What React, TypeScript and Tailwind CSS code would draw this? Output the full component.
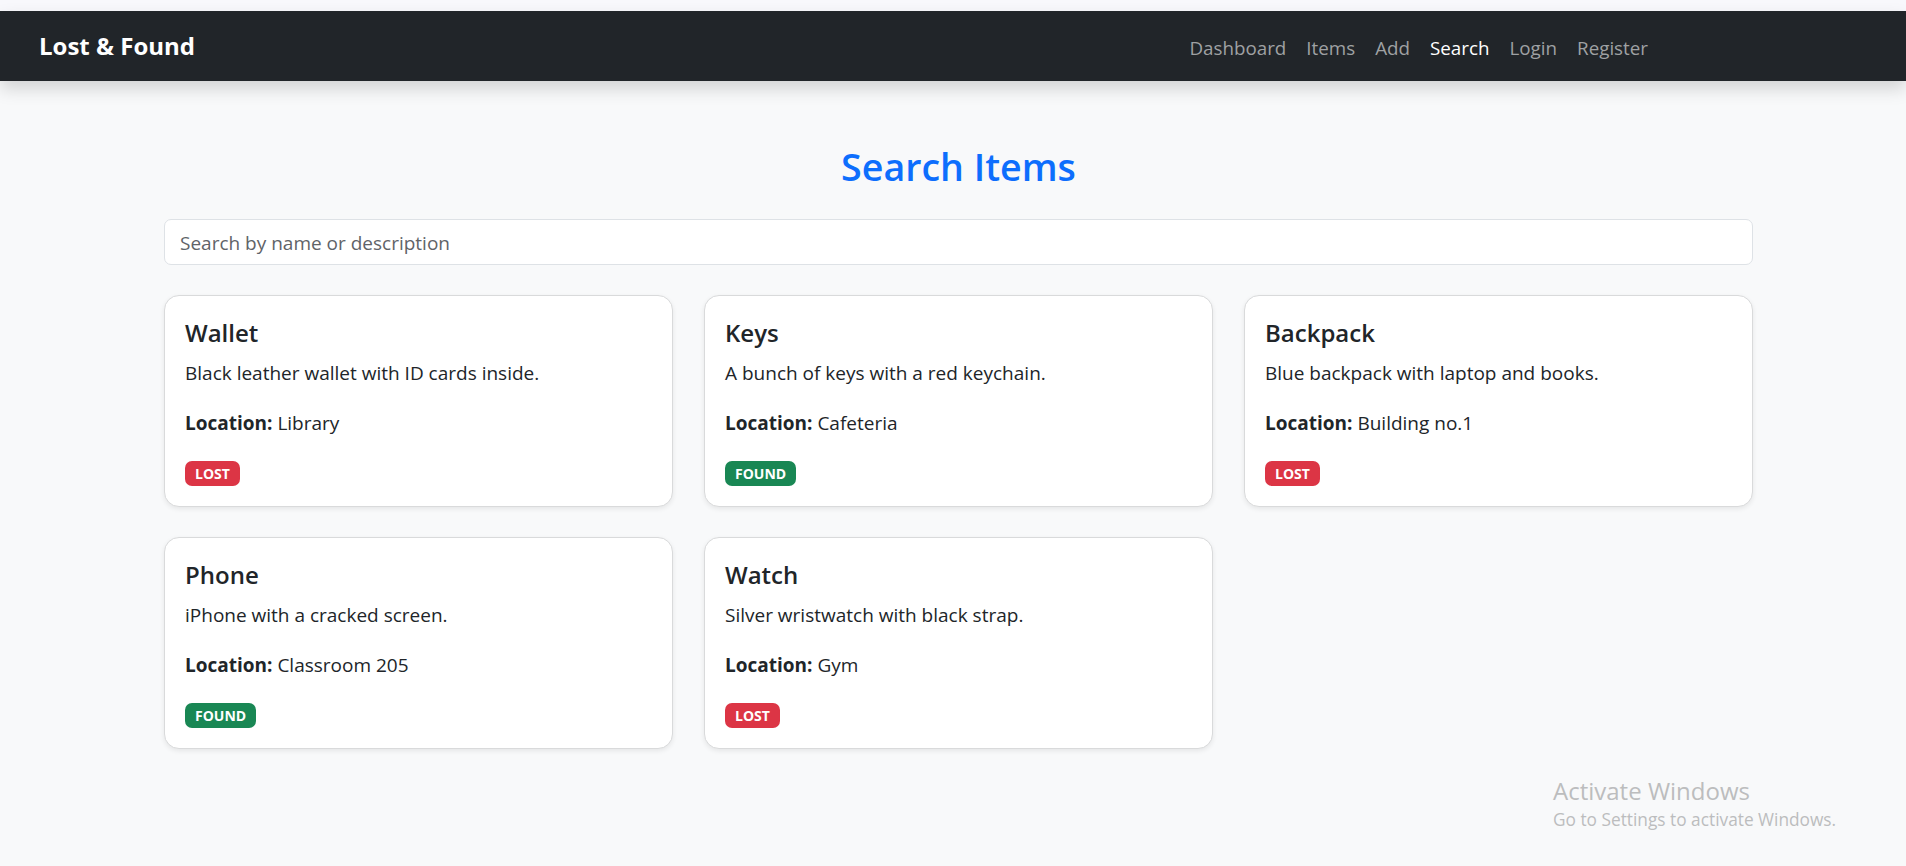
import React from "react";

type Item = { name: string; desc: string; location: string; status: "LOST" | "FOUND" };

const items: Item[] = [
  { name: "Wallet", desc: "Black leather wallet with ID cards inside.", location: "Library", status: "LOST" },
  { name: "Keys", desc: "A bunch of keys with a red keychain.", location: "Cafeteria", status: "FOUND" },
  { name: "Backpack", desc: "Blue backpack with laptop and books.", location: "Building no.1", status: "LOST" },
  { name: "Phone", desc: "iPhone with a cracked screen.", location: "Classroom 205", status: "FOUND" },
  { name: "Watch", desc: "Silver wristwatch with black strap.", location: "Gym", status: "LOST" },
];

const links = ["Dashboard", "Items", "Add", "Search", "Login", "Register"];

function Card({ item }: { item: Item }) {
  return (
    <div className="bg-white border border-[#d9dadb] rounded-[15px] shadow-[0_2px_5px_rgba(0,0,0,0.08)] px-[20px] pt-[22px] pb-[20px] h-[212px]">
      <h5 className="text-[24px] leading-[30px] font-semibold mb-[10px]">{item.name}</h5>
      <p className="text-[19px] leading-[30px] mb-[20px]">{item.desc}</p>
      <p className="text-[19px] leading-[30px] mb-[20px]">
        <strong className="font-bold">Location:</strong> {item.location}
      </p>
      <div className="h-[28px] flex items-end">
        <span
          className={
            "inline-flex items-center h-[25px] px-[10px] rounded-[7px] text-white text-[14px] font-bold leading-none " +
            (item.status === "LOST" ? "bg-[#dc3545]" : "bg-[#198754]")
          }
        >
          {item.status}
        </span>
      </div>
    </div>
  );
}

export default function App() {
  return (
    <div className="relative min-h-[866px] bg-[#f8f9fa] text-[#212529] font-['Open_Sans','Noto_Sans',sans-serif] overflow-hidden">
      <div className="h-[11px] bg-[#f8f8fc]" />
      <nav className="relative z-10 h-[70px] bg-[#212529] flex items-center pl-[39px] pr-[258px] shadow-[0_8px_16px_rgba(0,0,0,0.15)]">
        <span className="text-white font-bold text-[24px] leading-none">Lost &amp; Found</span>
        <ul className="ml-auto mt-[5px] flex gap-[20px] text-[18.8px]">
          {links.map((l) => (
            <li key={l} className={l === "Search" ? "text-white" : "text-[#9fa1a3]"}>
              {l}
            </li>
          ))}
        </ul>
      </nav>
      <main className="ml-[164px] w-[1589px] pt-[62px]">
        <h2 className="text-center text-[37.6px] leading-[48px] font-semibold text-[#0d6efd] mb-[28px]">Search Items</h2>
        <input
          className="block w-full h-[46px] border border-[#dee2e6] rounded-[7px] bg-white px-[15px] pt-[2px] text-[19px] outline-none placeholder:text-[#5f6368]"
          placeholder="Search by name or description"
        />
        <div className="grid grid-cols-3 gap-x-[31px] gap-y-[30px] mt-[30px]">
          {items.map((it) => (
            <Card key={it.name} item={it} />
          ))}
        </div>
      </main>
      <div className="absolute left-[1553px] top-[776px] text-[#bcbdbe]">
        <div className="text-[24px] leading-[30px]">Activate Windows</div>
        <div className="text-[17.3px] leading-[28px]">Go to Settings to activate Windows.</div>
      </div>
    </div>
  );
}
